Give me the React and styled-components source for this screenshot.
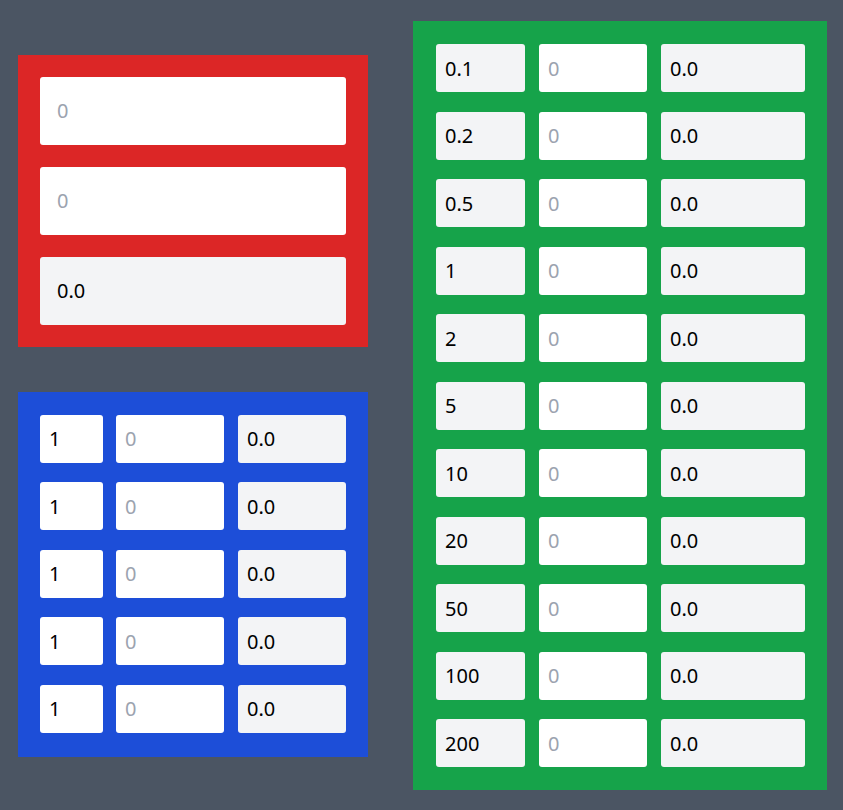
import React from 'react';
import styled, { createGlobalStyle } from 'styled-components';

const GlobalStyle = createGlobalStyle`
  html, body {
    margin: 0;
    padding: 0;
    background: #4b5563;
  }
  body {
    font-family: "Noto Sans", "Open Sans", sans-serif;
  }
`;

const Page = styled.div`
  display: flex;
  align-items: center;
  gap: 45px;
  padding: 21px 16px 20px 18px;
  min-height: 100vh;
  box-sizing: border-box;
`;

const LeftColumn = styled.div`
  display: flex;
  flex-direction: column;
  gap: 45px;
`;

const Panel = styled.div`
  box-sizing: border-box;
  width: ${props => props.$width}px;
  background: ${props => props.$bg};
  padding: ${props => props.$pad};
`;

const Stack = styled.div`
  display: flex;
  flex-direction: column;
  gap: 22px;
`;

const Grid = styled.div`
  display: grid;
  grid-template-columns: ${props => props.$cols};
  row-gap: 19.5px;
`;

const Field = styled.input`
  box-sizing: border-box;
  display: block;
  width: 100%;
  height: ${props => (props.$big ? 68 : 48)}px;
  margin: 0;
  border: none;
  outline: none;
  border-radius: 3px;
  padding: 0 0 0 ${props => (props.$big ? 17 : 9)}px;
  background: ${props => (props.readOnly ? '#f3f4f6' : '#ffffff')};
  color: #000;
  font-family: "Noto Sans", "Open Sans", sans-serif;
  font-size: 20px;

  &::placeholder {
    color: #9ca3af;
  }
`;

const Spacer = styled.span``;

const denominations = ['0.1', '0.2', '0.5', '1', '2', '5', '10', '20', '50', '100', '200'];

const App = () => {
    return (
        <>
            <GlobalStyle />
            <Page>
                <LeftColumn>
                    <Panel $width={350} $bg="#dc2626" $pad="22px">
                        <Stack>
                            <Field $big placeholder="0" />
                            <Field $big placeholder="0" />
                            <Field $big readOnly value="0.0" />
                        </Stack>
                    </Panel>
                    <Panel $width={350} $bg="#1d4ed8" $pad="23px 22px 24px">
                        <Grid $cols="63px 13px 108px 14px 108px">
                            {[0, 1, 2, 3, 4].map(i => (
                                <React.Fragment key={i}>
                                    <Field defaultValue="1" />
                                    <Spacer />
                                    <Field placeholder="0" />
                                    <Spacer />
                                    <Field readOnly value="0.0" />
                                </React.Fragment>
                            ))}
                        </Grid>
                    </Panel>
                </LeftColumn>
                <Panel $width={414} $bg="#16a34a" $pad="23px 22px 23px 23px">
                    <Grid $cols="89px 14px 108px 14px 144px">
                        {denominations.map(d => (
                            <React.Fragment key={d}>
                                <Field readOnly value={d} />
                                <Spacer />
                                <Field placeholder="0" />
                                <Spacer />
                                <Field readOnly value="0.0" />
                            </React.Fragment>
                        ))}
                    </Grid>
                </Panel>
            </Page>
        </>
    );
};

export default App;
